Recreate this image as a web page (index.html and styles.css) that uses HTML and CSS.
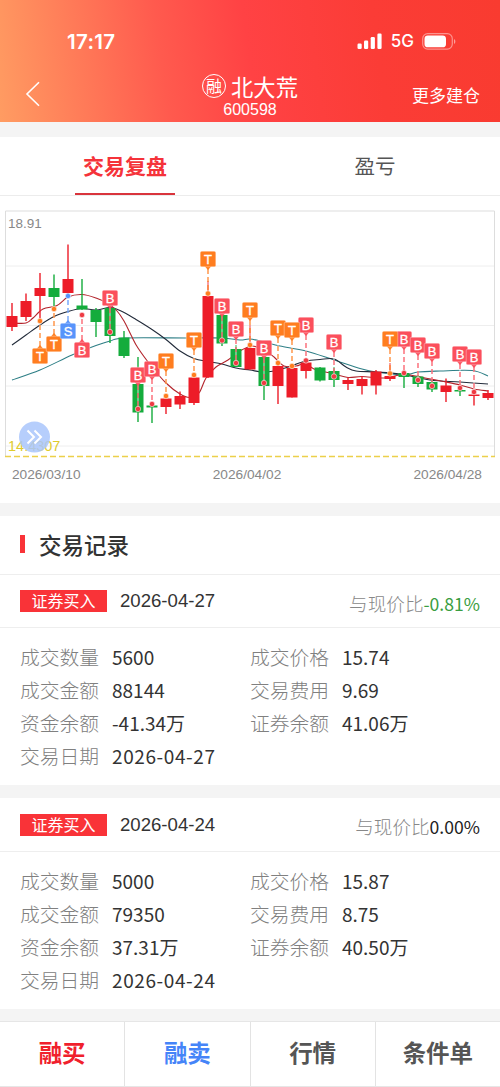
FILE: index.html
```html
<!DOCTYPE html>
<html lang="zh-CN">
<head>
  <meta charset="UTF-8">
  <meta name="viewport" content="width=device-width, initial-scale=1.0">
  <title>北大荒 交易复盘</title>
  <link rel="stylesheet" href="styles.css">
</head>
<body>
  <header class="header">
    <div class="status-bar">
      <span class="time">17:17</span>
      <div class="status-icons">
        <svg width="26" height="17" viewBox="0 0 26 17" fill="#fff">
          <rect x="0.5" y="10.5" width="4.2" height="5.5" rx="1.2"/>
          <rect x="7" y="7.5" width="4.2" height="8.5" rx="1.2"/>
          <rect x="13.7" y="4" width="4.2" height="12" rx="1.2"/>
          <rect x="20.4" y="0.5" width="4.2" height="15.5" rx="1.2"/>
        </svg>
        <span class="network">5G</span>
        <svg width="34" height="17" viewBox="0 0 34 17">
          <rect x="0.7" y="0.7" width="29.6" height="15.4" rx="5" fill="none" stroke="#fff" stroke-opacity="0.45" stroke-width="1.2"/>
          <rect x="2.5" y="2.5" width="21.5" height="11.8" rx="3.4" fill="#fff"/>
          <path d="M32 6v5c1.8-.8 1.8-4.2 0-5z" fill="#fff" fill-opacity="0.5"/>
        </svg>
      </div>
    </div>
    <div class="nav-bar">
      <svg class="back" width="16" height="26" viewBox="0 0 16 26" fill="none" stroke="#fff" stroke-width="1.6"><path d="M14 1.2L2 13l12 11.8"/></svg>
      <div class="stock">
        <div class="stock-name"><span class="badge">融</span>北大荒</div>
        <div class="stock-code">600598</div>
      </div>
      <span class="more">更多建仓</span>
    </div>
  </header>

  <nav class="tabs">
    <div class="tab active"><span>交易复盘</span></div>
    <div class="tab"><span>盈亏</span></div>
  </nav>

  <section class="chart">
    <svg id="kline" width="500" height="264" viewBox="0 196 500 264"></svg>
    <div class="dates"><span>2026/03/10</span><span>2026/04/02</span><span>2026/04/28</span></div>
  </section>

  <h2 class="section-title">交易记录</h2>

  <section class="record">
    <div class="record-head">
      <span class="tag">证券买入</span>
      <span class="date">2026-04-27</span>
      <span class="compare">与现价比<b class="down">-0.81%</b></span>
    </div>
    <dl class="details">
      <div><dt>成交数量</dt><dd>5600</dd></div>
      <div><dt>成交价格</dt><dd>15.74</dd></div>
      <div><dt>成交金额</dt><dd>88144</dd></div>
      <div><dt>交易费用</dt><dd>9.69</dd></div>
      <div><dt>资金余额</dt><dd>-41.34万</dd></div>
      <div><dt>证券余额</dt><dd>41.06万</dd></div>
      <div><dt>交易日期</dt><dd class="long">2026-04-27</dd></div>
    </dl>
  </section>

  <section class="record">
    <div class="record-head">
      <span class="tag">证券买入</span>
      <span class="date">2026-04-24</span>
      <span class="compare">与现价比<b>0.00%</b></span>
    </div>
    <dl class="details">
      <div><dt>成交数量</dt><dd>5000</dd></div>
      <div><dt>成交价格</dt><dd>15.87</dd></div>
      <div><dt>成交金额</dt><dd>79350</dd></div>
      <div><dt>交易费用</dt><dd>8.75</dd></div>
      <div><dt>资金余额</dt><dd>37.31万</dd></div>
      <div><dt>证券余额</dt><dd>40.50万</dd></div>
      <div><dt>交易日期</dt><dd class="long">2026-04-24</dd></div>
    </dl>
  </section>

  <footer class="actions">
    <a class="buy">融买</a>
    <a class="sell">融卖</a>
    <a>行情</a>
    <a>条件单</a>
  </footer>

  <script>
    const STEP = 14, START = 12;

    // up(1)/down(0), high, low, body top, body bottom
    const candles = [
      [1, 303, 331, 316, 327], [1, 293.5, 321, 301, 317], [1, 273, 321, 288, 296],
      [0, 274.5, 308, 288, 297], [1, 244.5, 294, 279, 293], [0, 279, 310, 305.5, 309.5],
      [0, 308, 337, 310, 322], [0, 304, 343, 308, 336], [0, 331, 358, 337.5, 356],
      [0, 357, 422, 384, 412.5], [0, 402, 423, 405.5, 407.5], [1, 394, 414, 398.5, 407],
      [1, 391.5, 409, 396, 404.5], [1, 375, 405, 377.5, 403], [1, 281, 378, 296, 377.5],
      [0, 312, 346, 315, 343.5], [0, 345, 367, 349, 367], [1, 325, 369.5, 348, 369.5],
      [0, 354, 400, 357, 386], [1, 362, 404, 366, 386], [1, 365, 397.5, 368, 397.5],
      [1, 359, 378.5, 362.5, 371], [0, 367, 381.5, 367.5, 380.5], [0, 367, 387, 371, 380],
      [1, 377.5, 390, 380, 384], [1, 376, 394.5, 379, 386], [1, 370, 394.5, 371.5, 385.5],
      [1, 363, 381, 376, 379], [0, 370, 388, 373, 377], [0, 375, 387, 376.5, 384],
      [0, 380, 392, 382, 389.5], [1, 378.5, 402, 385.5, 392], [0, 386, 396, 390, 391.5],
      [1, 391, 405.5, 394.5, 396], [1, 390, 400, 393, 398]
    ];

    // type, candle index, label center, price dot
    const marks = [
      ['T', 2, 356, 321], ['T', 3, 344, 309], ['S', 4, 331, 296], ['B', 5, 350, 315],
      ['B', 7, 298, 332], ['B', 9, 375, 409], ['B', 10, 369, 404], ['T', 11, 361, 396],
      ['T', 13, 340, 375], ['T', 14, 259, 293.5], ['B', 15, 306, 340.5], ['B', 16, 329, 363],
      ['T', 17, 310, 345], ['B', 18, 348, 383], ['T', 19, 328, 363], ['B', 21, 325, 360.5],
      ['T', 20, 330, 366], ['B', 23, 342, 376.5], ['B', 28, 339, 373], ['T', 27, 339, 373.5],
      ['B', 29, 345, 380], ['B', 30, 351, 386], ['B', 32, 354, 388], ['B', 33, 357, 392]
    ];

    const averages = [
      ['#2e7f86', [[12,380],[40,370],[72,355],[96,345.5],[110,341],[125,338],[186,338],[222,338],[240,340],[250,339],[264,342],[280,346],[306,351],[334,360],[362,369],[376,372],[404,375],[418,372],[440,371],[472,370.5],[488,376]]],
      ['#222b3a', [[12,345],[26,335],[40,325],[54,316.5],[68,311.5],[82,308.5],[96,310],[110,307.5],[121,311],[136,319.5],[152,329.5],[166,339.5],[180,351],[194,358.5],[208,361.5],[222,364],[236,368],[250,370],[262,372],[274,371],[288,367],[306,361],[320,359.5],[334,359],[346,367],[356,371],[376,372],[400,374],[430,380],[460,382],[488,384]]],
      ['#b3242c', [[12,323],[26,323],[33,318],[43,309],[57,305.5],[68,297],[82,294.5],[96,298],[108,303.5],[117,311],[124,321],[131,335],[138,348],[152,367],[166,383],[180,394],[190,397.5],[199,393],[206,378],[216,367],[228,360],[240,351],[252,346],[264,350],[274,357],[284,366],[296,366],[306,363],[314,369],[334,374],[348,377.5],[362,376.5],[384,378],[404,374.5],[425,378],[446,382],[460,385],[474,389],[488,391]]]
    ];

    const colors = { T: '#ff7d1f', B: '#fb4f5c', S: '#5794fb' };
    const x = i => START + i * STEP;

    // Smooth path through the points
    function curve(pts) {
      let d = `M${pts[0]}`;
      for (let i = 0; i < pts.length - 1; i++) {
        const p0 = pts[i - 1] || pts[i], p1 = pts[i], p2 = pts[i + 1], p3 = pts[i + 2] || p2;
        d += `C${p1[0] + (p2[0] - p0[0]) / 6},${p1[1] + (p2[1] - p0[1]) / 6} ${p2[0] - (p3[0] - p1[0]) / 6},${p2[1] - (p3[1] - p1[1]) / 6} ${p2}`;
      }
      return d;
    }

    let out = '';
    [266, 325.5, 386, 446].forEach(y => {
      out += `<path class="grid" d="M5 ${y}H495"/>`;
    });
    out += '<path class="frame" d="M5.5 457V211H494.5V457"/><path class="base" d="M5 456.5H495"/>';

    averages.forEach(([color, pts]) => {
      out += `<path d="${curve(pts)}" fill="none" stroke="${color}" stroke-width="1.1"/>`;
    });

    candles.forEach(([up, high, low, top, bottom], i) => {
      const c = up ? '#ed1c28' : '#14ac3c';
      out += `<path d="M${x(i)} ${high}V${low}" stroke="${c}" stroke-width="1.4"/>`;
      out += `<rect x="${x(i) - 5.5}" y="${top}" width="11" height="${bottom - top}" fill="${c}"/>`;
    });

    marks.forEach(([type, i, y, dot]) => {
      const c = colors[type];
      const s = dot > y ? 1 : -1;
      out += `<path d="M${x(i)} ${y + s * 10}V${dot}" stroke="#fff" stroke-opacity=".55" stroke-width="1.4"/>`;
      out += `<path d="M${x(i)} ${y + s * 10}V${dot}" stroke="${c}" stroke-width="1.2" stroke-dasharray="5 3"/>`;
      out += `<circle cx="${x(i)}" cy="${dot}" r="2.7" fill="${type === 'B' ? '#ee3b43' : c}" stroke="#fff" stroke-opacity=".6" stroke-width=".9"/>`;
      out += `<path d="M${x(i) - 3.5} ${y + s * 7}h7l-3.5 ${s * 4}z" fill="${c}"/>`;
      out += `<rect x="${x(i) - 7.8}" y="${y - 7.8}" width="15.6" height="15.6" rx="1.5" fill="${c}" stroke="#fff" stroke-opacity=".6" stroke-width=".6"/>`;
      out += `<text class="mark" x="${x(i)}" y="${y + 4.6}">${type}</text>`;
    });

    out += '<text class="high" x="8" y="227.5">18.91</text>';
    out += '<text class="low" x="8" y="451">14.4307</text>';
    out += '<circle cx="34.5" cy="437" r="15.5" fill="#a9c5fb" fill-opacity=".85"/>';
    out += '<path d="M27.5 430.5l6.5 6.5-6.5 6.5M34.5 430.5l6.5 6.5-6.5 6.5" fill="none" stroke="#fff" stroke-width="2"/>';
    document.getElementById('kline').innerHTML = out;
  </script>
</body>
</html>
```
FILE: styles.css
```css
* {
  box-sizing: border-box;
}
body {
  margin: 0;
  width: 500px;
  background: #f4f4f4;
  color: #333;
  font-family: "Noto Sans CJK SC", sans-serif;
}
.header {
  height: 122px;
  color: #fff;
  background: linear-gradient(82deg, #ff9c62 0%, #ff7a58 17%, #ff5a4e 33%, #ff4244 50%, #fb3c36 75%, #f93b30 100%);
}
.status-bar {
  height: 66px;
  padding: 16px 44px 0 67px;
  display: flex;
  align-items: center;
  justify-content: space-between;
}
.time {
  font: 600 20.5px Inter, sans-serif;
  letter-spacing: 0.3px;
}
.status-icons {
  display: flex;
  align-items: center;
  gap: 8px;
}
.network {
  font: 500 17px Inter, sans-serif;
}
.nav-bar {
  height: 56px;
  padding: 0 20px 0 25px;
  display: grid;
  grid-template-columns: 1fr 120px 1fr;
  align-items: center;
}
.stock {
  text-align: center;
  margin-right: 0;
  margin-left: -5px;
  padding-top: 2px;
}
.stock-name {
  display: flex;
  align-items: center;
  justify-content: center;
  gap: 5px;
  font-size: 22.3px;
  line-height: 28px;
}
.badge {
  width: 24px;
  height: 24px;
  border: 1px solid #fff;
  border-radius: 50%;
  font-size: 16px;
  line-height: 21px;
}
.stock-code {
  margin-top: 1px;
  font: 16px/18px "Liberation Sans", sans-serif;
}
.more {
  justify-self: end;
  font-size: 17px;
}
.tabs {
  height: 59px;
  margin-top: 15px;
  display: flex;
  background: #fff;
  border-bottom: 1px solid #ececec;
}
.tab {
  flex: 1;
  display: flex;
  justify-content: center;
  font-size: 20.5px;
  line-height: 57px;
  color: #555;
}
.tab.active {
  color: #f5333a;
  font-weight: bold;
  font-size: 21px;
}
.active span {
  height: 58px;
  padding: 0 8px;
  border-bottom: 2px solid #d9343c;
}
.chart {
  height: 307px;
  background: #fff;
}
.chart svg {
  display: block;
}
.grid {
  stroke: #eee;
}
.frame {
  fill: none;
  stroke: #ddd;
}
.base {
  stroke: #ecd04a;
  stroke-width: 1.5;
  stroke-dasharray: 6 3;
}
.mark {
  fill: #fff;
  stroke: #fff;
  stroke-width: 0.3px;
  font: 13px "Liberation Sans", sans-serif;
  text-anchor: middle;
}
.high,
.low {
  font: 13.5px "Liberation Sans", sans-serif;
  fill: #888;
}
.low {
  fill: #dfcb2c;
  font-size: 14.5px;
}
.dates {
  display: flex;
  justify-content: space-between;
  padding: 6px 18px 0 12px;
  font: 13.7px/18px "Liberation Sans", sans-serif;
  color: #888;
}
.section-title {
  height: 59px;
  margin: 13px 0 0;
  padding-left: 20px;
  display: flex;
  align-items: center;
  background: #fff;
  border-bottom: 1px solid #eee;
  font-size: 22.5px;
  line-height: 33px;
  font-weight: 500;
  padding-bottom: 2px;
}
.section-title::before {
  content: "";
  width: 5px;
  height: 18px;
  margin-right: 14px;
  background: #f93338;
}
.record {
  background: #fff;
}
.record + .record {
  margin-top: 13px;
}
.record-head {
  height: 54px;
  padding: 0 20px;
  display: flex;
  align-items: center;
  border-bottom: 1px solid #eee;
}
.section-title + .record .record-head {
  height: 53px;
}
.tag {
  width: 87px;
  height: 22px;
  margin-right: 13px;
  background: #f93338;
  color: #fff;
  font-size: 16px;
  line-height: 21px;
  text-align: center;
}
.date {
  font: 18.6px "Liberation Sans", sans-serif;
}
.compare {
  margin-left: auto;
  padding-top: 2px;
  font-size: 18.6px;
  font-weight: 300;
  color: #888;
}
.compare b {
  font-weight: normal;
  font-size: 17.6px;
  color: #222;
}
.compare .down {
  color: #3a9d41;
}
.details {
  height: 157px;
  margin: 0;
  padding: 12px 20px 0;
  display: grid;
  grid-template-columns: 230px 230px;
  grid-auto-rows: 33px;
}
.details div {
  display: flex;
  align-items: center;
  line-height: 33px;
}
dt {
  width: 92px;
  font-size: 19.8px;
  font-weight: 300;
  color: #808080;
}
dd {
  margin: 0;
  font-size: 19px;
}
.long {
  letter-spacing: 0.6px;
}
.actions {
  height: 66px;
  margin-top: 12px;
  display: flex;
  background: #fff;
  border-top: 1px solid #e6e6e6;
  border-bottom: 1px solid #e6e6e6;
}
.actions a {
  flex: 1;
  border-right: 1px solid #e3e3e3;
  color: #555;
  font-size: 23.5px;
  font-weight: bold;
  line-height: 61px;
  text-align: center;
}
.actions a:last-child {
  border-right: none;
}
.actions .buy {
  color: #f0202c;
}
.actions .sell {
  color: #4584f8;
}
```
